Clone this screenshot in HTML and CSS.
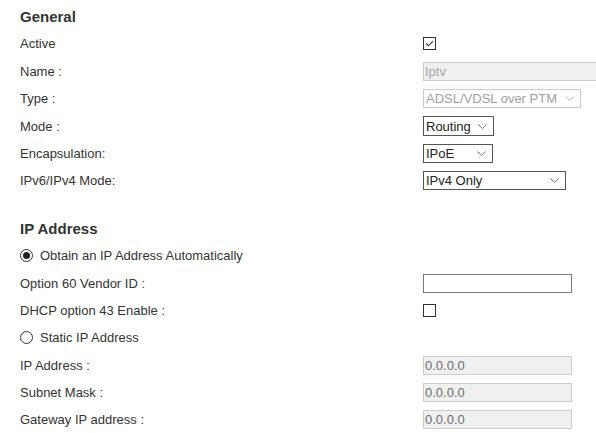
FILE: index.html
```html
<!doctype html>
<html lang="en">
  <head>
    <meta charset="UTF-8" />
    <meta name="viewport" content="width=device-width, initial-scale=1.0" />
    <title>WAN settings</title>
    <link rel="stylesheet" href="styles.css">
  </head>
  <body>
    <form class="page">
      <section class="block">
        <h2 class="block-title">General</h2>

        <div class="row">
          <span class="label">Active</span>
          <span class="check is-checked">
            <svg viewBox="0 0 13 13"><path d="M2.5 6.5 L5.2 9.2 L10.5 3.6" /></svg>
          </span>
        </div>
        <div class="row">
          <span class="label">Name :</span>
          <input class="field field-off field-name" type="text" value="Iptv" readonly />
        </div>
        <div class="row">
          <span class="label">Type :</span>
          <span class="select select-off select-type">
            <span class="select-text">ADSL/VDSL over PTM</span>
            <svg class="chev" viewBox="0 0 9 5"><path d="M0.5 0.5 L4.5 4.5 L8.5 0.5" /></svg>
          </span>
        </div>
        <div class="row">
          <span class="label">Mode :</span>
          <span class="select select-mode">
            <span class="select-text">Routing</span>
            <svg class="chev" viewBox="0 0 9 5"><path d="M0.5 0.5 L4.5 4.5 L8.5 0.5" /></svg>
          </span>
        </div>
        <div class="row">
          <span class="label">Encapsulation:</span>
          <span class="select select-encap">
            <span class="select-text">IPoE</span>
            <svg class="chev" viewBox="0 0 9 5"><path d="M0.5 0.5 L4.5 4.5 L8.5 0.5" /></svg>
          </span>
        </div>
        <div class="row">
          <span class="label">IPv6/IPv4 Mode:</span>
          <span class="select select-ipmode">
            <span class="select-text">IPv4 Only</span>
            <svg class="chev" viewBox="0 0 9 5"><path d="M0.5 0.5 L4.5 4.5 L8.5 0.5" /></svg>
          </span>
        </div>
      </section>

      <section class="block block-ip">
        <h2 class="block-title">IP Address</h2>

        <div class="row">
          <span class="radio-line"><span class="radio is-on"></span>Obtain an IP Address Automatically</span>
        </div>
        <div class="row">
          <span class="label">Option 60 Vendor ID :</span>
          <input class="field field-wide" type="text" />
        </div>
        <div class="row">
          <span class="label">DHCP option 43 Enable :</span>
          <span class="check"></span>
        </div>
        <div class="row">
          <span class="radio-line"><span class="radio"></span>Static IP Address</span>
        </div>
        <div class="row">
          <span class="label">IP Address :</span>
          <input class="field field-off field-wide" type="text" value="0.0.0.0" readonly />
        </div>
        <div class="row">
          <span class="label">Subnet Mask :</span>
          <input class="field field-off field-wide" type="text" value="0.0.0.0" readonly />
        </div>
        <div class="row">
          <span class="label">Gateway IP address :</span>
          <input class="field field-off field-wide" type="text" value="0.0.0.0" readonly />
        </div>
      </section>
    </form>
  </body>
</html>
```

FILE: styles.css
```css
* {
  box-sizing: border-box;
}

html,
body {
  margin: 0;
  overflow: hidden;
  background: #fff;
  font-family: "Liberation Sans", Arial, sans-serif;
  font-size: 13px;
  color: #333;
}

.page {
  padding: 1px 0 0 20px;
}

.block-title {
  margin: 0;
  height: 29.3px;
  padding-top: 5px;
  line-height: 22px;
  font-size: 15px;
  font-weight: bold;
  color: #333;
}

.block-ip {
  margin-top: 18.5px;
}

.row {
  display: grid;
  grid-template-columns: 403px 1fr;
  align-items: center;
  height: 27.35px;
}

.label {
  white-space: nowrap;
}

.radio-line {
  display: flex;
  align-items: center;
  gap: 7px;
  white-space: nowrap;
}

.radio {
  width: 13px;
  height: 13px;
  border: 1px solid #333;
  border-radius: 50%;
  display: grid;
  place-items: center;
}

.radio.is-on::after {
  content: "";
  width: 7px;
  height: 7px;
  border-radius: 50%;
  background: #222;
}

.check {
  width: 13px;
  height: 13px;
  border: 1px solid #333;
  display: block;
  background: #fff;
}

.check svg {
  display: block;
  width: 11px;
  height: 11px;
}

.check path {
  fill: none;
  stroke: #333;
  stroke-width: 1.3;
}

.field {
  height: 19px;
  border: 1px solid #777;
  padding: 0 1px;
  font: inherit;
  font-size: 13px;
  color: #333;
  background: #fff;
  outline: none;
}

.field-off {
  background: #f0f0f0;
  border-color: #ccc;
  color: #6d6d6d;
}

.field-name {
  width: 190px;
  color: #a6a6a6;
}

.field-wide {
  width: 149px;
}

.select {
  height: 19.5px;
  border: 1px solid #555;
  display: flex;
  align-items: center;
  justify-content: space-between;
  padding: 0 6px 0 2px;
  background: #fff;
  color: #222;
  font-size: 13px;
  white-space: nowrap;
}

.select-off {
  border-color: #ccc;
  color: #a0a0a0;
}

.chev {
  width: 9px;
  height: 5px;
  flex: none;
}

.chev path {
  fill: none;
  stroke: #777;
  stroke-width: 1;
}

.select-off .chev path {
  stroke: #c4c4c4;
}

.select-type {
  width: 158px;
}

.select-mode {
  width: 71px;
}

.select-encap {
  width: 70px;
}

.select-ipmode {
  width: 143px;
}
```
